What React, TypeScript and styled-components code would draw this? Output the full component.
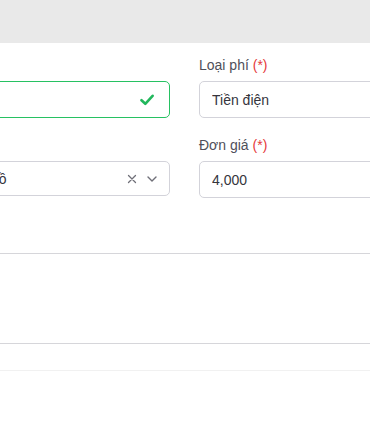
import React from "react";
import styled, { createGlobalStyle } from "styled-components";

const Global = createGlobalStyle`
  html, body { margin: 0; padding: 0; background: #ffffff; }
  body { font-family: "Liberation Sans", Arial, sans-serif; overflow: hidden; }
  * { box-sizing: border-box; }
`;

const Page = styled.div`
  width: 370px;
  height: 437px;
  overflow: hidden;
  display: flex;
  flex-direction: column;
`;

const TopBar = styled.div`
  height: 43px;
  background: #e9e9e9;
  flex-shrink: 0;
`;

const FormGrid = styled.div`
  display: grid;
  grid-template-columns: 224px 200px;
  column-gap: 29px;
  row-gap: 17px;
  margin-left: -54px;
  padding-top: 12px;
`;

const Field = styled.div`
  display: flex;
  flex-direction: column;
  gap: 6px;
`;

const Label = styled.label`
  font-size: 14px;
  line-height: 20px;
  height: 20px;
  color: #4f4f5a;
  white-space: nowrap;
`;

const Req = styled.span`
  color: #e5393b;
`;

const Box = styled.div<{ $valid?: boolean; $h?: number }>`
  height: ${(p) => p.$h ?? 37}px;
  border: 1px solid ${(p) => (p.$valid ? "#27c162" : "#d3d3da")};
  border-radius: 5px;
  padding: 0 12px;
  display: flex;
  align-items: center;
  gap: 8px;
  font-size: 14px;
  color: #35353d;
  background: #fff;
`;

const Value = styled.span`
  flex: 1;
  white-space: nowrap;
  overflow: hidden;
`;

const Icons = styled.span<{ $pr?: number }>`
  display: flex;
  align-items: center;
  gap: 10px;
  padding-right: ${(p) => p.$pr ?? 0}px;
`;

const Divider = styled.div<{ $color: string; $mt: number }>`
  height: 1px;
  background: ${(p) => p.$color};
  margin-top: ${(p) => p.$mt}px;
`;

const Check = () => (
  <svg width="14" height="12" viewBox="0 0 14 12">
    <path d="M1.5 6.2 L5.3 9.8 L12.6 1.8" fill="none" stroke="#22b75c" strokeWidth="2.6" strokeLinecap="round" strokeLinejoin="round" />
  </svg>
);

const Clear = () => (
  <svg width="10" height="10" viewBox="0 0 10 10">
    <path d="M1.5 1.5 L8.5 8.5 M8.5 1.5 L1.5 8.5" stroke="#6f6f78" strokeWidth="1.3" strokeLinecap="round" />
  </svg>
);

const Chevron = () => (
  <svg width="10" height="6" viewBox="0 0 10 6">
    <path d="M1 1 L5 5 L9 1" fill="none" stroke="#6f6f78" strokeWidth="1.4" strokeLinecap="round" strokeLinejoin="round" />
  </svg>
);

export default function App() {
  return (
    <Page>
      <Global />
      <TopBar />
      <FormGrid>
        <Field>
          <Label />
          <Box $valid>
            <Value />
            <Icons $pr={3}>
              <Check />
            </Icons>
          </Box>
        </Field>
        <Field>
          <Label>
            Loại phí <Req>(*)</Req>
          </Label>
          <Box>
            <Value>Tiền điện</Value>
          </Box>
        </Field>
        <Field>
          <Label />
          <Box $h={35}>
            <Value>Nhà Hồ</Value>
            <Icons>
              <Clear />
              <Chevron />
            </Icons>
          </Box>
        </Field>
        <Field>
          <Label>
            Đơn giá <Req>(*)</Req>
          </Label>
          <Box>
            <Value>4,000</Value>
          </Box>
        </Field>
      </FormGrid>
      <Divider $color="#d6d6da" $mt={55} />
      <Divider $color="#d6d6da" $mt={89} />
      <Divider $color="#f1f1f1" $mt={26} />
    </Page>
  );
}
